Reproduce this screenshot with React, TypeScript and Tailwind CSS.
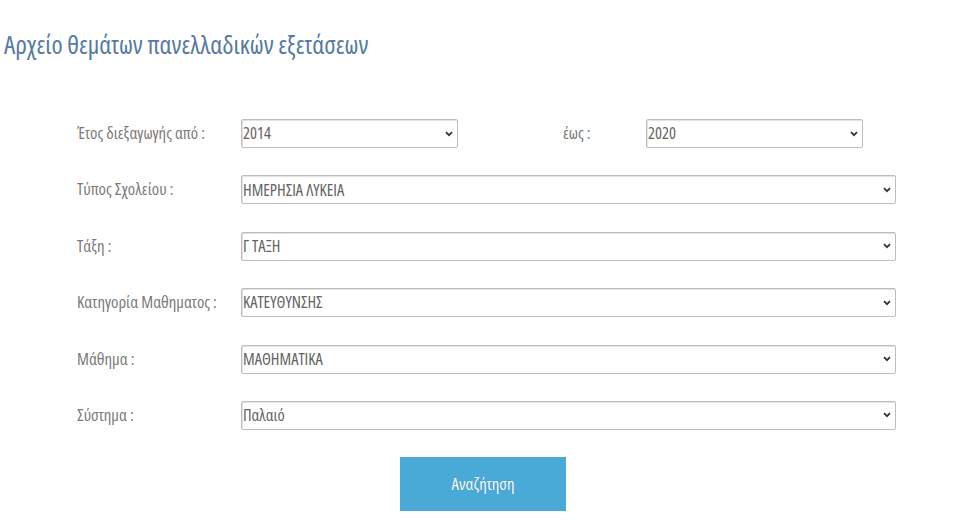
import type { ReactNode } from "react";

const FONT = "font-['Open_Sans','Noto_Sans',sans-serif] font-stretch-condensed";

function Chevron() {
  return (
    <svg
      className="pointer-events-none absolute right-[5px] top-1/2 -translate-y-1/2 w-[8px] h-[6px]"
      viewBox="0 0 8 6"
      fill="none"
      stroke="#333"
      strokeWidth={1.8}
    >
      <path d="M1 1.2l3 3 3-3" />
    </svg>
  );
}

function Select({ value, className = "" }: { value: string; className?: string }) {
  return (
    <div className={`relative h-[29px] ${className}`}>
      <select
        defaultValue={value}
        className={`${FONT} appearance-none w-full h-full bg-white border border-[#bdbdbd] rounded-[2px] shadow-[inset_1px_1px_1px_rgba(0,0,0,0.12)] pl-[1px] pr-6 text-[16.4px] font-normal text-[#636363] outline-none`}
      >
        <option>{value}</option>
      </select>
      <Chevron />
    </div>
  );
}

function Label({ children }: { children: ReactNode }) {
  return <span className={`${FONT} text-[16.8px] text-[#7a7a7a] leading-none`}>{children}</span>;
}

const rows = [
  { label: "Τύπος Σχολείου :", value: "ΗΜΕΡΗΣΙΑ ΛΥΚΕΙΑ" },
  { label: "Τάξη :", value: "Γ ΤΑΞΗ" },
  { label: "Κατηγορία Μαθηματος :", value: "ΚΑΤΕΥΘΥΝΣΗΣ" },
  { label: "Μάθημα :", value: "ΜΑΘΗΜΑΤΙΚΑ" },
  { label: "Σύστημα :", value: "Παλαιό" },
];

export default function App() {
  return (
    <div className="w-[960px] h-[520px] bg-white overflow-hidden">
      <h1 className={`${FONT} pl-[4px] pt-[28px] text-[25.4px] leading-[32px] font-normal text-[#5479a2]`}>
        Αρχείο θεμάτων πανελλαδικών εξετάσεων
      </h1>

      <div className="pl-[77px] pt-[59px] w-[896px] flex flex-col gap-[27.4px]">
        <div className="grid grid-cols-[164px_217px_105px_83px_217px] items-center">
          <Label>Έτος διεξαγωγής από :</Label>
          <Select value="2014" />
          <span />
          <Label>έως :</Label>
          <Select value="2020" />
        </div>
        {rows.map((r) => (
          <div key={r.label} className="grid grid-cols-[164px_1fr] items-center">
            <Label>{r.label}</Label>
            <Select value={r.value} />
          </div>
        ))}
      </div>

      <div className="flex justify-center pt-[27px] pl-[6px]">
        <button className={`${FONT} w-[166px] h-[54px] bg-[#49aad8] text-white text-[16.8px] [text-shadow:0_0_1px_rgba(0,0,0,0.25)]`}>
          Αναζήτηση
        </button>
      </div>
    </div>
  );
}
